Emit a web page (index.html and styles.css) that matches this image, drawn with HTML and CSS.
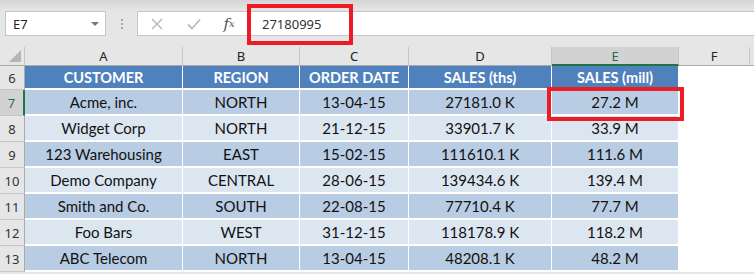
FILE: index.html
```html
<!DOCTYPE html>
<html lang="en">
<head>
    <meta charset="UTF-8">
    <title>Sales</title>
    <link rel="stylesheet" href="styles.css">
</head>
<body>
    <div class="topbar"></div>
    <div class="formula-row">
        <div class="name-box">
            <span>E7</span>
            <span class="drop"></span>
        </div>
        <div class="grip"><i></i><i></i><i></i></div>
        <div class="formula-box">
            <div class="fbtn">
                <svg width="14" height="14" viewBox="0 0 14 14"><path d="M2 2 L12 12 M12 2 L2 12" stroke="#bcbcbc" stroke-width="1.6" fill="none"/></svg>
            </div>
            <div class="fbtn">
                <svg width="16" height="14" viewBox="0 0 16 14"><path d="M2 7.5 L6 11.5 L14 2.5" stroke="#bcbcbc" stroke-width="1.8" fill="none"/></svg>
            </div>
            <div class="fbtn fx">f<sub>x</sub></div>
            <div class="formula-input">27180995</div>
        </div>
        <div class="mark mark-formula"></div>
    </div>

    <div class="sheet">
        <div class="corner"><span></span></div>
        <div class="colhead">A</div>
        <div class="colhead">B</div>
        <div class="colhead">C</div>
        <div class="colhead">D</div>
        <div class="colhead active">E</div>
        <div class="colhead">F</div>
        <div class="colhead rest"></div>

        <div class="rowhead">6</div>
        <div class="cell head">CUSTOMER</div>
        <div class="cell head">REGION</div>
        <div class="cell head">ORDER DATE</div>
        <div class="cell head">SALES (ths)</div>
        <div class="cell head">SALES (mill)</div>
        <div class="cell blank"></div>
        <div class="cell blank"></div>

        <div class="rowhead active">7</div>
        <div class="cell odd">Acme, inc.</div>
        <div class="cell odd">NORTH</div>
        <div class="cell odd">13-04-15</div>
        <div class="cell odd">27181.0 K</div>
        <div class="cell odd selected">27.2 M</div>
        <div class="cell blank"></div>
        <div class="cell blank"></div>

        <div class="rowhead">8</div>
        <div class="cell even">Widget Corp</div>
        <div class="cell even">NORTH</div>
        <div class="cell even">21-12-15</div>
        <div class="cell even">33901.7 K</div>
        <div class="cell even">33.9 M</div>
        <div class="cell blank"></div>
        <div class="cell blank"></div>

        <div class="rowhead">9</div>
        <div class="cell odd">123 Warehousing</div>
        <div class="cell odd">EAST</div>
        <div class="cell odd">15-02-15</div>
        <div class="cell odd">111610.1 K</div>
        <div class="cell odd">111.6 M</div>
        <div class="cell blank"></div>
        <div class="cell blank"></div>

        <div class="rowhead">10</div>
        <div class="cell even">Demo Company</div>
        <div class="cell even">CENTRAL</div>
        <div class="cell even">28-06-15</div>
        <div class="cell even">139434.6 K</div>
        <div class="cell even">139.4 M</div>
        <div class="cell blank"></div>
        <div class="cell blank"></div>

        <div class="rowhead">11</div>
        <div class="cell odd">Smith and Co.</div>
        <div class="cell odd">SOUTH</div>
        <div class="cell odd">22-08-15</div>
        <div class="cell odd">77710.4 K</div>
        <div class="cell odd">77.7 M</div>
        <div class="cell blank"></div>
        <div class="cell blank"></div>

        <div class="rowhead">12</div>
        <div class="cell even">Foo Bars</div>
        <div class="cell even">WEST</div>
        <div class="cell even">31-12-15</div>
        <div class="cell even">118178.9 K</div>
        <div class="cell even">118.2 M</div>
        <div class="cell blank"></div>
        <div class="cell blank"></div>

        <div class="rowhead">13</div>
        <div class="cell odd">ABC Telecom</div>
        <div class="cell odd">NORTH</div>
        <div class="cell odd">13-04-15</div>
        <div class="cell odd">48208.1 K</div>
        <div class="cell odd">48.2 M</div>
        <div class="cell blank"></div>
        <div class="cell blank"></div>

        <div class="mark mark-cell"></div>
    </div>
</body>
</html>
```

FILE: styles.css
```css
body {
    margin: 0;
    background-color: #e6e6e6;
    font-family: 'Lato', sans-serif;
    overflow: hidden;
}
.topbar {
    height: 11px;
    background: linear-gradient(#d6d6d6, #e6e6e6);
}
.formula-row {
    position: relative;
    display: flex;
    align-items: center;
    height: 25px;
    padding-left: 5px;
}
.name-box {
    box-sizing: border-box;
    width: 101px;
    height: 25px;
    background: #fff;
    border: 1px solid #c6c6c6;
    display: flex;
    align-items: center;
    justify-content: space-between;
    padding: 0 6px 0 7px;
    font-family: 'Noto Sans', sans-serif;
    font-size: 13px;
    color: #222;
}
.drop {
    width: 0;
    height: 0;
    border-left: 4px solid transparent;
    border-right: 4px solid transparent;
    border-top: 4px solid #777;
}
.grip {
    width: 31px;
    display: flex;
    flex-direction: column;
    align-items: center;
    gap: 2px;
}
.grip i {
    width: 2px;
    height: 2px;
    background: #a8a8a8;
}
.formula-box {
    box-sizing: border-box;
    flex: 1;
    height: 25px;
    background: #fff;
    border: 1px solid #c6c6c6;
    border-right: none;
    display: flex;
    align-items: center;
}
.fbtn {
    width: 37px;
    display: flex;
    justify-content: center;
    align-items: center;
}
.fbtn.fx {
    width: 34px;
    font-family: 'DejaVu Serif', serif;
    font-style: italic;
    font-size: 15px;
    color: #555;
}
.fx sub {
    font-size: 10px;
    vertical-align: -1px;
}
.formula-input {
    flex: 1;
    padding-left: 16px;
    font-family: 'Noto Sans', sans-serif;
    font-size: 13px;
    color: #333;
}
.mark {
    position: absolute;
    box-sizing: border-box;
    border: 4px solid #ec1c24;
    pointer-events: none;
}
.mark-formula {
    left: 247px;
    top: -7px;
    width: 106px;
    height: 41px;
}
.sheet {
    position: relative;
    margin-top: 11px;
    display: grid;
    grid-template-columns: 25px 158px 117px 109px 143px 127px 71px 1fr;
    grid-template-rows: 19px 24px repeat(7, 26px);
    background: #fff;
}
.corner {
    position: relative;
    background: #e6e6e6;
    border-right: 1px solid #c6c6c6;
    border-bottom: 1px solid #ababab;
}
.corner span {
    position: absolute;
    right: 3px;
    bottom: 3px;
    width: 0;
    height: 0;
    border-left: 12px solid transparent;
    border-bottom: 12px solid #b5b5b5;
}
.colhead {
    box-sizing: border-box;
    background: #e6e6e6;
    border-right: 1px solid #c6c6c6;
    border-bottom: 1px solid #ababab;
    display: flex;
    align-items: center;
    justify-content: center;
    font-family: 'Noto Sans', sans-serif;
    font-size: 13px;
    color: #222;
}
.colhead.active {
    background: #d2d2d2;
    color: #217346;
    border-bottom: 2px solid #217346;
}
.colhead.rest {
    border-right: none;
}
.rowhead {
    box-sizing: border-box;
    background: #e6e6e6;
    border-right: 1px solid #ababab;
    border-bottom: 1px solid #c6c6c6;
    display: flex;
    align-items: center;
    justify-content: center;
    font-family: 'Noto Sans', sans-serif;
    font-size: 13px;
    color: #333;
}
.rowhead.active {
    background: #d2d2d2;
    color: #217346;
    border-right: 2px solid #217346;
}
.cell {
    box-sizing: border-box;
    border-right: 1px solid #fff;
    border-bottom: 2px solid #fff;
    display: flex;
    align-items: center;
    justify-content: center;
    font-size: 15px;
    color: #111;
}
.cell.head {
    background: #4f81bd;
    color: #fff;
    font-size: 14.5px;
    font-weight: 700;
}
.cell.odd {
    background: #b8cce4;
}
.cell.even {
    background: #dce6f1;
}
.cell.blank {
    background: #fff;
}
.mark-cell {
    left: 547px;
    top: 40px;
    width: 137px;
    height: 34px;
}
```
